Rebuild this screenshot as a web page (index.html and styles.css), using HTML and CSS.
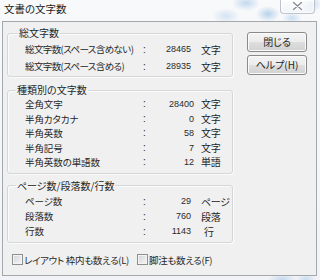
FILE: index.html
```html
<!DOCTYPE html>
<html lang="ja">
<head>
<meta charset="utf-8">
<title>文書の文字数</title>
<link rel="stylesheet" href="styles.css">
</head>
<body>
<div class="window">
  <div class="titlebar">
    <span class="title">文書の文字数</span>
    <span class="close">
      <svg width="35" height="14" viewBox="0 0 35 14">
        <path d="M13.5 3.5 L21.5 10.5 M21.5 3.5 L13.5 10.5" stroke="#ffffff" stroke-width="3.2" stroke-linecap="round" fill="none"/>
        <path d="M13.5 3.5 L21.5 10.5 M21.5 3.5 L13.5 10.5" stroke="#858c96" stroke-width="1.4" stroke-linecap="round" fill="none"/>
      </svg>
    </span>
  </div>
  <div class="client">
    <div class="main">
      <fieldset class="group g1">
        <legend class="legend legend-first">総文字数</legend>
        <div class="row"><span class="lbl lbl-tight">総文字数(スペース含めない)</span><span class="colon">:</span><span class="num">28465</span><span class="unit">文字</span></div>
        <div class="row"><span class="lbl lbl-tight">総文字数(スペース含める)</span><span class="colon">:</span><span class="num">28935</span><span class="unit">文字</span></div>
      </fieldset>
      <fieldset class="group g2">
        <legend class="legend">種類別の文字数</legend>
        <div class="row row-wide"><span class="lbl">全角文字</span><span class="colon">:</span><span class="num">28400</span><span class="unit">文字</span></div>
        <div class="row row-wide"><span class="lbl">半角カタカナ</span><span class="colon">:</span><span class="num">0</span><span class="unit">文字</span></div>
        <div class="row row-wide"><span class="lbl">半角英数</span><span class="colon">:</span><span class="num">58</span><span class="unit">文字</span></div>
        <div class="row row-wide"><span class="lbl">半角記号</span><span class="colon">:</span><span class="num">7</span><span class="unit">文字</span></div>
        <div class="row row-wide"><span class="lbl">半角英数の単語数</span><span class="colon">:</span><span class="num">12</span><span class="unit">単語</span></div>
      </fieldset>
      <fieldset class="group g3">
        <legend class="legend">ページ数/段落数/行数</legend>
        <div class="row"><span class="lbl">ページ数</span><span class="colon">:</span><span class="num">29</span><span class="unit">ページ</span></div>
        <div class="row"><span class="lbl">段落数</span><span class="colon">:</span><span class="num">760</span><span class="unit">段落</span></div>
        <div class="row"><span class="lbl">行数</span><span class="colon">:</span><span class="num">1143</span><span class="unit unit-gyo">行</span></div>
      </fieldset>
      <div class="checks">
        <label class="check"><span class="box"></span><span class="check-text">レイアウト 枠内も数える(L)</span></label>
        <label class="check"><span class="box"></span><span class="check-text">脚注も数える(F)</span></label>
      </div>
    </div>
    <div class="side">
      <button class="btn" type="button">閉じる</button>
      <button class="btn" type="button">ヘルプ(H)</button>
    </div>
  </div>
</div>
</body>
</html>
```
FILE: styles.css
```css
* { box-sizing: border-box; }
html, body { margin: 0; padding: 0; }
body {
  width: 320px;
  height: 280px;
  overflow: hidden;
  font-family: "Noto Sans CJK JP", "Noto Sans", sans-serif;
  font-feature-settings: "palt" 1;
  color: #262626;
}
.window {
  width: 320px;
  height: 280px;
  display: flex;
  flex-direction: column;
  background:
    radial-gradient(ellipse 14px 8px at 246px 3px, rgba(150,190,228,0.55), rgba(150,190,228,0) 100%),
    radial-gradient(ellipse 12px 8px at 268px 14px, rgba(130,178,222,0.55), rgba(130,178,222,0) 100%),
    radial-gradient(ellipse 14px 8px at 226px 16px, rgba(170,200,232,0.45), rgba(170,200,232,0) 100%),
    radial-gradient(ellipse 10px 8px at 312px 4px, rgba(150,190,228,0.5), rgba(150,190,228,0) 100%),
    radial-gradient(ellipse 10px 6px at 292px 18px, rgba(150,190,228,0.45), rgba(150,190,228,0) 100%),
    radial-gradient(ellipse 14px 5px at 282px 279px, rgba(150,190,228,0.5), rgba(150,190,228,0) 100%),
    radial-gradient(ellipse 10px 5px at 306px 279px, rgba(150,190,228,0.45), rgba(150,190,228,0) 100%),
    linear-gradient(#f8f9fb, #f1f3f6);
}
.titlebar {
  height: 21px;
  flex: none;
  display: flex;
  justify-content: space-between;
  align-items: flex-start;
  padding: 0 5px 0 4px;
}
.title {
  font-size: 10.5px;
  line-height: 17px;
  color: #1c1c1c;
}
.close {
  width: 35px;
  height: 14px;
  display: block;
  border: 1px solid rgba(120,130,145,0.45);
  border-top: none;
  border-radius: 0 0 4px 4px;
  background: linear-gradient(rgba(255,255,255,0.75), rgba(235,240,246,0.6));
  box-shadow: inset 0 0 0 1px rgba(255,255,255,0.6);
}
.close svg { display: block; margin: -1px 0 0 -1px; }
.client {
  flex: none;
  height: 255px;
  margin: 0 3px 0 2px;
  border: 1px solid #a4a8ad;
  background: #f0f0f0;
  display: flex;
  padding: 5px 8px 0 4px;
}
.main {
  width: 226px;
  flex: none;
  display: flex;
  flex-direction: column;
}
.group {
  margin: 0;
  padding: 0;
  min-width: 0;
  border: 1px solid #d3d7da;
  border-radius: 3px;
  box-shadow: inset 1px 1px 0 #fbfbfb, 1px 1px 0 #fbfbfb;
}
.legend {
  margin-left: 8px;
  padding: 0 1px;
  font-size: 10px;
  line-height: 12px;
  color: #262626;
  white-space: nowrap;
}
.legend-first { margin-left: 10px; }
.g1 { padding: 2px 0 1px; }
.g2 { margin-top: 7px; padding: 1px 0 3px; }
.g3 { margin-top: 6px; padding: 2px 0 3px; }
.row {
  display: grid;
  grid-template-columns: 118px 6px 42px auto;
  margin-left: 17px;
  font-size: 10px;
  line-height: 15px;
  height: 15px;
  align-items: center;
  white-space: nowrap;
}
.lbl { font-size: 9.5px; letter-spacing: -0.1px; overflow: visible; }
.lbl-tight { letter-spacing: -0.6px; }
.g1 .row { line-height: 17px; height: 17px; }
.g2 .row { line-height: 14.6px; height: 14.6px; }
.row-wide { grid-template-columns: 118px 6px 45px auto; }
.colon { font-family: "Liberation Sans", sans-serif; font-size: 10px; text-align: left; }
.num {
  font-family: "Liberation Sans", sans-serif;
  font-size: 9px;
  text-align: right;
  color: #2a2a2a;
}
.unit { padding-left: 10px; letter-spacing: -0.3px; }
.row-wide .unit { padding-left: 7px; }
.unit-gyo { padding-left: 13px; }
.checks {
  margin-top: 9px;
  display: grid;
  grid-template-columns: 125px auto;
  padding-left: 5px;
  height: 16px;
  align-items: center;
  white-space: nowrap;
}
.check {
  display: flex;
  align-items: center;
  font-size: 9.5px;
  line-height: 16px;
  color: #262626;
  letter-spacing: -0.3px;
}
.box {
  width: 11px;
  height: 11px;
  flex: none;
  border: 1px solid #8e8f8f;
  background: linear-gradient(135deg, #d2d5d9, #f6f6f6);
  box-shadow: inset 0 0 0 1px #f4f4f4;
  margin-right: 1px;
}
.side {
  margin-left: 14px;
  padding-top: 5px;
  display: flex;
  flex-direction: column;
  gap: 3px;
}
.btn {
  width: 60px;
  height: 20px;
  padding: 0;
  border: 1px solid #8a8a8a;
  border-radius: 3px;
  background: linear-gradient(#f4f4f4 0%, #ececec 50%, #dedede 50%, #d2d2d2 100%);
  box-shadow: inset 0 0 0 1px #fbfbfb;
  font-family: "Noto Sans CJK JP", "Noto Sans", sans-serif;
  font-feature-settings: "palt" 1;
  font-size: 10px;
  line-height: 18px;
  color: #262626;
}
```
